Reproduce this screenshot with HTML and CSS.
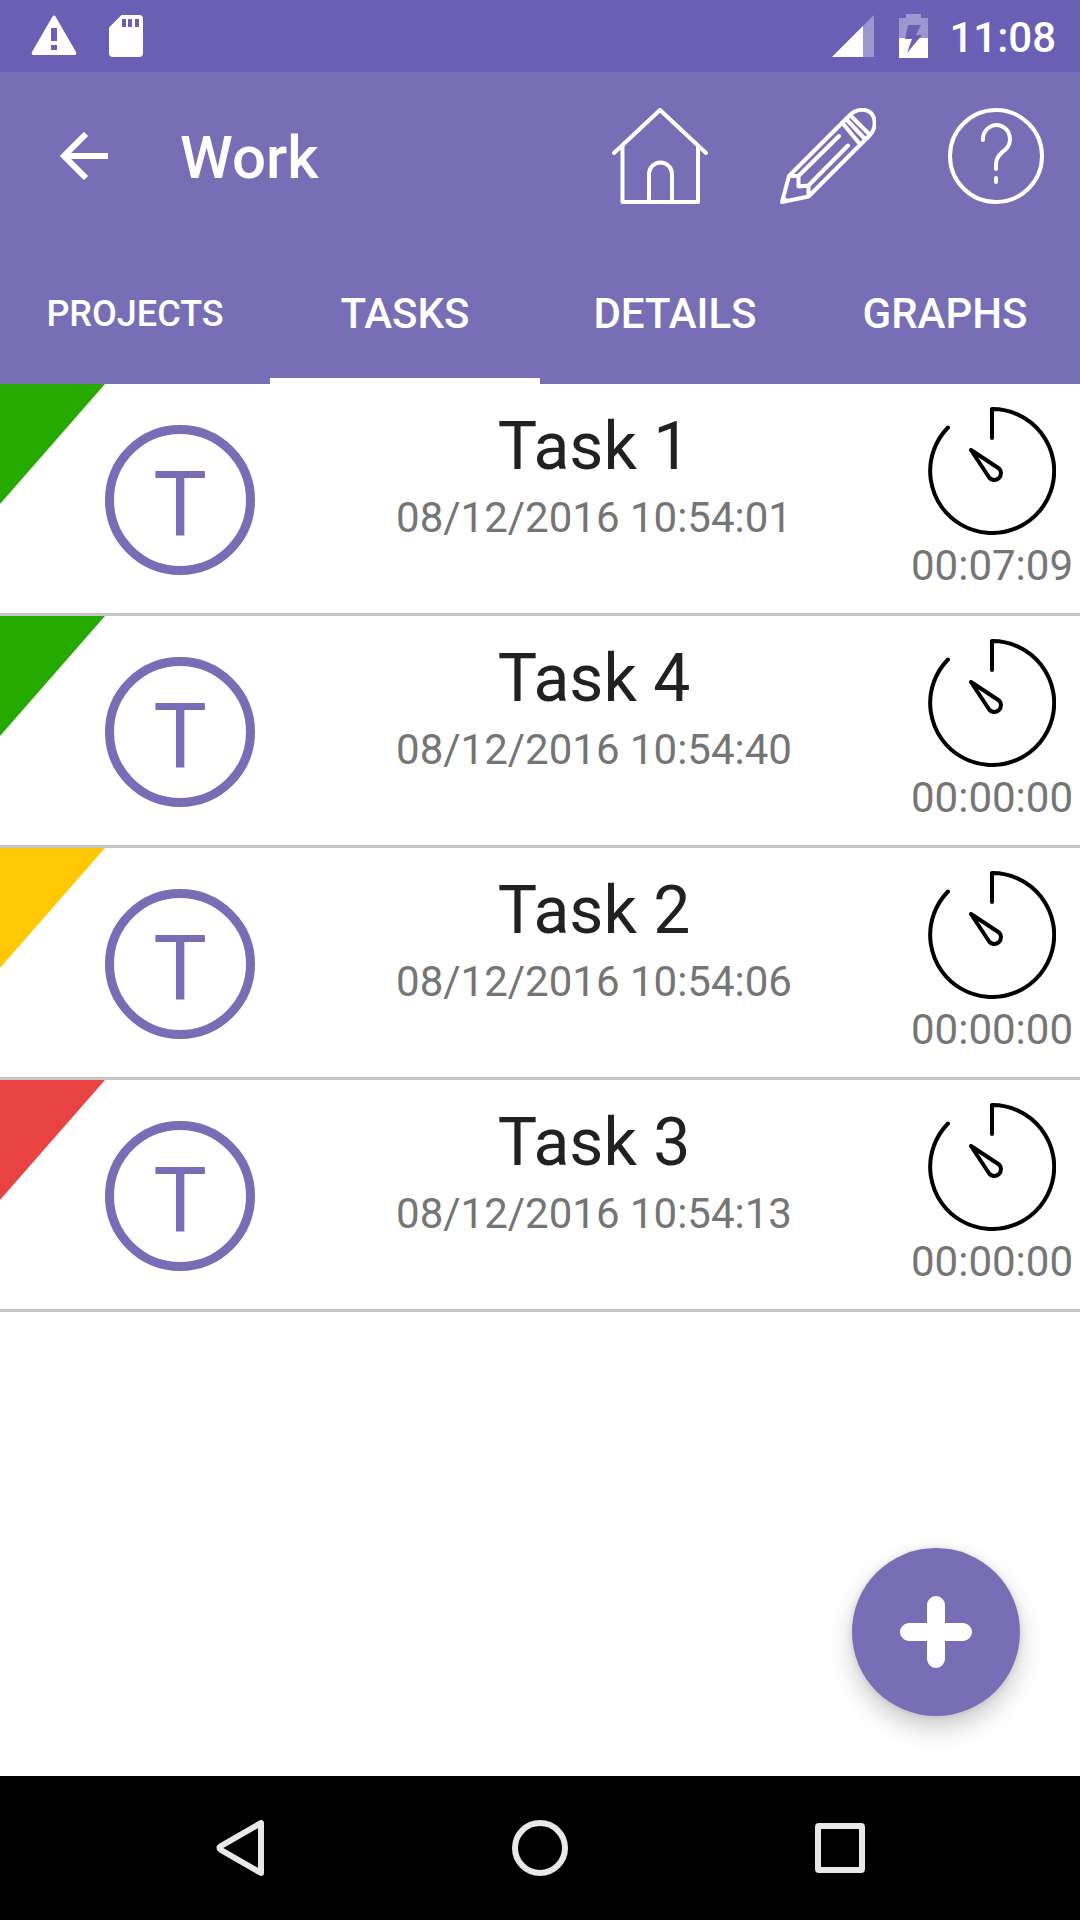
FILE: index.html
```html
<!DOCTYPE html>
<html lang="en">
<head>
<meta charset="utf-8">
<meta name="viewport" content="width=device-width, initial-scale=1">
<title>Work</title>
<link rel="stylesheet" href="styles.css">
</head>
<body>
<svg class="symbols" aria-hidden="true">
  <symbol id="timer" viewBox="0 0 128 128">
    <path d="M64 31V2A62 62 0 1 1 20 20.500M43 43L71 61.500A6.500 6.500 0 1 1 61.500 71Z" fill="none" stroke="currentColor" stroke-width="4" stroke-linecap="round" stroke-linejoin="round"/>
  </symbol>
</svg>
<div class="status-bar">
  <div class="status-group status-left">
    <svg width="46" height="42" viewBox="0 0 46 42" role="img" aria-label="Warning"><path fill="#fff" fill-rule="evenodd" d="M21.500 1.500Q23 -.5 24.500 1.500L45 37Q46 40 43.500 40H2.500Q0 40 1 37ZM20 13v13h6V13ZM20 30v5h6v-5Z"/></svg>
    <svg width="34" height="42" viewBox="0 0 34 42" role="img" aria-label="SD card"><path fill="#fff" fill-rule="evenodd" d="M12.500 0H30Q34 0 34 4V38Q34 42 30 42H4Q0 42 0 38V12.500ZM13 4v8h4V4ZM19 4v8h4V4ZM26 4v8h4V4Z"/></svg>
  </div>
  <div class="status-group status-right">
    <div class="status-group status-icons">
      <svg width="42" height="42" viewBox="0 0 42 42" role="img" aria-label="Signal"><path fill="#9e96ce" d="M0 42L42 0V42Z"/><path fill="#fff" d="M0 42L31 11V42Z"/></svg>
      <svg width="29" height="44" viewBox="0 0 29 44" role="img" aria-label="Charging"><path fill="#9e96ce" d="M7 0H22V4H29V24H0V4H7Z"/><path fill="#fff" d="M0 24H29V44H0Z"/><path fill="#6a5fb4" d="M9 11H22L17 21H23L8 39L13 25H6Z"/></svg>
    </div>
    <time>11:08</time>
  </div>
</div>
<header class="app-bar">
  <div class="toolbar">
    <button class="back" aria-label="Back"><svg width="48" height="48" viewBox="0 0 48 48"><path d="M26 2L4 24L26 46M4 24H48" fill="none" stroke="#fff" stroke-width="6"/></svg></button>
    <h1>Work</h1>
    <button class="action" aria-label="Home"><svg class="line-icon" viewBox="0 0 96 96"><path d="M2 45L48 2L94 45M10.500 38V94H86V38M37 94V66a11.500 11.500 0 0 1 23 0V94"/></svg></button>
    <button class="action" aria-label="Edit"><svg class="line-icon" viewBox="0 0 96 96"><path d="M2 94L9 68L70 7C76 1 86 0 91 5C96 10 96 21 90 27L28.500 88.500ZM9 68H18.500V78.500L28.500 77.500V88.500M18.500 68L59 28M28.500 77.500L68 37.500M62 14.500L79 35M66 11L85 31M70 7L90 27M3 90L7 93"/></svg></button>
    <button class="action" aria-label="Help"><svg class="line-icon" viewBox="0 0 96 96"><circle cx="48" cy="48" r="46"/><path d="M35 32A13.500 14 0 1 1 57.500 41.500Q48 48 48 56V61M48 70V74"/></svg></button>
  </div>
  <nav class="tabs">
    <a class="tab tab-small" href="#projects">PROJECTS</a>
    <a class="tab tab-active" href="#tasks" aria-current="page">TASKS</a>
    <a class="tab" href="#details">DETAILS</a>
    <a class="tab" href="#graphs">GRAPHS</a>
  </nav>
</header>
<main>
  <ul class="task-list" id="tasks">
    <li class="task low">
      <span class="avatar">T</span>
      <div class="info"><h2>Task 1</h2><p>08/12/2016 10:54:01</p></div>
      <button class="timer" aria-label="Timer for Task 1"><svg><use href="#timer"/></svg><span>00:07:09</span></button>
    </li>
    <li class="task low">
      <span class="avatar">T</span>
      <div class="info"><h2>Task 4</h2><p>08/12/2016 10:54:40</p></div>
      <button class="timer" aria-label="Timer for Task 4"><svg><use href="#timer"/></svg><span>00:00:00</span></button>
    </li>
    <li class="task medium">
      <span class="avatar">T</span>
      <div class="info"><h2>Task 2</h2><p>08/12/2016 10:54:06</p></div>
      <button class="timer" aria-label="Timer for Task 2"><svg><use href="#timer"/></svg><span>00:00:00</span></button>
    </li>
    <li class="task high">
      <span class="avatar">T</span>
      <div class="info"><h2>Task 3</h2><p>08/12/2016 10:54:13</p></div>
      <button class="timer" aria-label="Timer for Task 3"><svg><use href="#timer"/></svg><span>00:00:00</span></button>
    </li>
  </ul>
  <button class="fab" aria-label="Add task"><svg width="72" height="72" viewBox="0 0 72 72"><path d="M36 9V63M9 36H63" stroke="#fff" stroke-width="18" stroke-linecap="round"/></svg></button>
</main>
<nav class="system-nav">
  <button aria-label="System back"><svg width="56" height="56" viewBox="0 0 56 56"><path d="M49 3V53L9 30Q6 28 9 26Z"/></svg></button>
  <button aria-label="System home"><svg width="56" height="56" viewBox="0 0 56 56"><circle cx="28" cy="28" r="25"/></svg></button>
  <button aria-label="Recent apps"><svg width="56" height="56" viewBox="0 0 56 56"><rect x="6" y="6" width="44" height="44" rx="1"/></svg></button>
</nav>
</body>
</html>
```
FILE: styles.css
```css
* { box-sizing: border-box; }
body {
  margin: 0;
  min-height: 100vh;
  display: flex;
  flex-direction: column;
  background: #fff;
  font-family: Roboto, "Liberation Sans", sans-serif;
}
h1, h2, p, ul { margin: 0; padding: 0; }
button {
  border: 0;
  padding: 0;
  background: none;
  font: inherit;
  color: inherit;
  cursor: pointer;
}
svg { display: block; flex: none; }
.symbols { position: absolute; width: 0; height: 0; }

.status-bar {
  height: 72px;
  display: flex;
  justify-content: space-between;
  align-items: center;
  padding: 0 24px 0 31px;
  background: #6a5fb4;
  color: #fff;
}
.status-group { display: flex; align-items: center; }
.status-left { gap: 32px; }
.status-icons { gap: 25px; }
.status-right { gap: 21px; }
.status-right time { padding-top: 3px; font-size: 42px; font-weight: 500; line-height: 50px; }

.app-bar { background: #776eb6; color: #fff; }
.toolbar { height: 168px; display: flex; align-items: center; }
.back {
  width: 168px;
  height: 168px;
  display: flex;
  align-items: center;
  justify-content: center;
}
.toolbar h1 { flex: 1; padding: 4px 0 0 12px; font-size: 60px; font-weight: 500; line-height: 72px; }
.action {
  width: 168px;
  height: 168px;
  display: flex;
  align-items: center;
  justify-content: center;
}
.line-icon {
  width: 96px;
  height: 96px;
  fill: none;
  stroke: #fff;
  stroke-width: 4px;
  stroke-linecap: round;
  stroke-linejoin: round;
}
.tabs { display: grid; grid-template-columns: repeat(4, 1fr); }
.tab {
  height: 144px;
  display: flex;
  align-items: center;
  justify-content: center;
  padding-top: 3px;
  border: solid transparent;
  border-width: 6px 0;
  color: #fff;
  font-size: 42px;
  font-weight: 500;
  text-decoration: none;
}
.tab-small { font-size: 36px; }
.tab-active { border-bottom-color: #fff; }

main { flex: 1; position: relative; }
.task-list { list-style: none; }
.task {
  position: relative;
  display: grid;
  grid-template-columns: 360px 1fr 252px;
  align-items: start;
  min-height: 232px;
  border-bottom: 3px solid #c6c6c6;
}
.task::before {
  content: "";
  position: absolute;
  top: 0;
  left: 0;
  width: 105px;
  height: 120px;
  background: var(--priority);
  clip-path: polygon(0 0, 100% 0, 0 100%);
}
.low { --priority: #27aa00; }
.medium { --priority: #ffc800; }
.high { --priority: #e84242; }
.avatar {
  justify-self: center;
  width: 150px;
  height: 150px;
  margin-top: 41px;
  border: 9px solid #776eb6;
  border-radius: 50%;
  color: #776eb6;
  font-size: 90px;
  line-height: 144px;
  text-align: center;
}
.info { padding-top: 24px; text-align: center; }
.info h2 { color: #212121; font-size: 66px; font-weight: 400; line-height: 78px; }
.info p { margin-top: 7px; color: #757575; font-size: 42px; line-height: 50px; }
.timer {
  justify-self: end;
  display: flex;
  flex-direction: column;
  align-items: center;
  gap: 6px;
  padding: 23px 7px 0 0;
}
.timer svg { width: 128px; height: 128px; color: #000; }
.timer span { color: #757575; font-size: 42px; line-height: 50px; }

.fab {
  position: absolute;
  right: 60px;
  bottom: 60px;
  width: 168px;
  height: 168px;
  display: flex;
  align-items: center;
  justify-content: center;
  border-radius: 50%;
  background: #776eb6;
  box-shadow: 0 12px 24px rgba(0, 0, 0, 0.2), 0 0 6px rgba(0, 0, 0, 0.12);
}

.system-nav {
  height: 144px;
  display: flex;
  justify-content: center;
  background: #000;
}
.system-nav button {
  width: 300px;
  display: flex;
  align-items: center;
  justify-content: center;
}
.system-nav svg {
  fill: none;
  stroke: #e8e8e8;
  stroke-width: 6px;
  stroke-linejoin: round;
}
```
